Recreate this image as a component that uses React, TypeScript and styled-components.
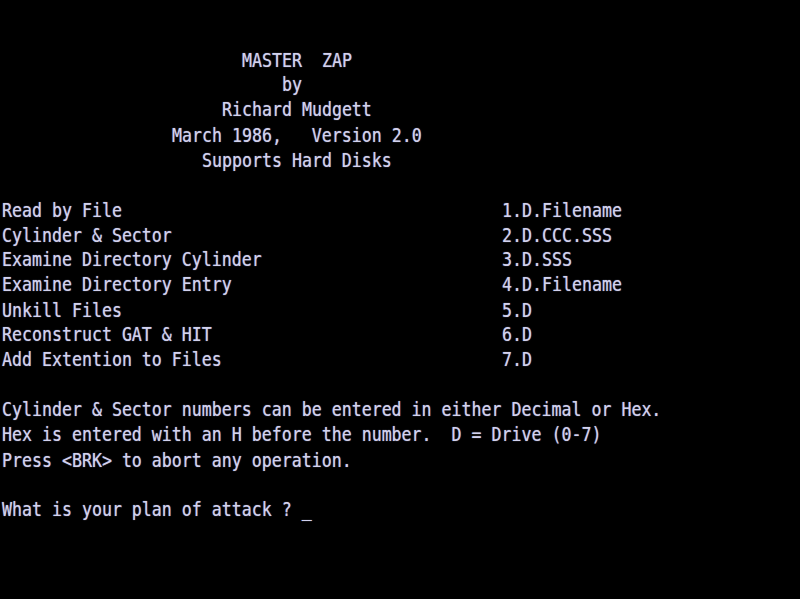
import React from "react";
import styled, { createGlobalStyle } from "styled-components";

const Global = createGlobalStyle`
  html, body {
    margin: 0;
    padding: 0;
    background: #000;
    width: 800px;
    height: 599px;
    overflow: hidden;
  }
`;

const Screen = styled.div`
  width: 800px;
  height: 599px;
  background: #000;
  overflow: hidden;
`;

const Text = styled.div`
  padding-left: 2px;
  font-family: "DejaVu Sans Mono", "Liberation Mono", monospace;
  font-size: 16.6px;
  line-height: 22.32px;
  color: #d2d2ee;
  text-shadow: 0 0 1px rgba(200, 200, 245, 0.7);
  transform: translateY(-1.5px) scaleY(1.12);
  transform-origin: top left;
  white-space: pre;
`;

const Line = styled.div<{ $indent?: number }>`
  height: 22.32px;
  padding-left: ${(p) => (p.$indent ?? 0) * 10}px;
`;

const MenuRow = styled.div`
  display: grid;
  grid-template-columns: 500px 1fr;
  height: 22.32px;
`;

const Cursor = styled.span`
  display: inline-block;
  width: 10px;
`;

const menu: [string, string][] = [
  ["Read by File", "1.D.Filename"],
  ["Cylinder & Sector", "2.D.CCC.SSS"],
  ["Examine Directory Cylinder", "3.D.SSS"],
  ["Examine Directory Entry", "4.D.Filename"],
  ["Unkill Files", "5.D"],
  ["Reconstruct GAT & HIT", "6.D"],
  ["Add Extention to Files", "7.D"],
];

export default function App() {
  return (
    <Screen>
      <Global />
      <Text>
        <Line />
        <Line />
        <Line $indent={24}>MASTER  ZAP</Line>
        <Line $indent={28}>by</Line>
        <Line $indent={22}>Richard Mudgett</Line>
        <Line $indent={17}>March 1986,   Version 2.0</Line>
        <Line $indent={20}>Supports Hard Disks</Line>
        <Line />
        {menu.map(([a, b]) => (
          <MenuRow key={a}>
            <span>{a}</span>
            <span>{b}</span>
          </MenuRow>
        ))}
        <Line />
        <Line>Cylinder &amp; Sector numbers can be entered in either Decimal or Hex.</Line>
        <Line>Hex is entered with an H before the number.  D = Drive (0-7)</Line>
        <Line>Press &lt;BRK&gt; to abort any operation.</Line>
        <Line />
        <Line>
          What is your plan of attack ? <Cursor>_</Cursor>
        </Line>
      </Text>
    </Screen>
  );
}
